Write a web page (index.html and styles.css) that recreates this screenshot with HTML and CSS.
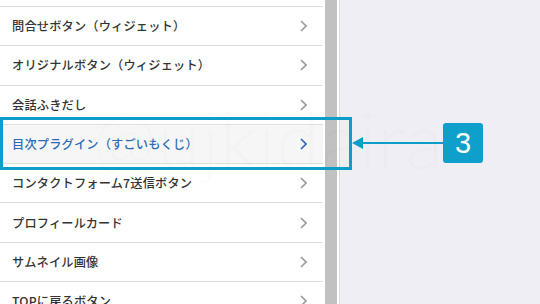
FILE: index.html
```html
<!DOCTYPE html>
<html lang="ja">
<head>
    <meta charset="UTF-8">
    <title>メニュー</title>
    <link rel="stylesheet" href="styles.css">
</head>
<body>
    <div class="page">
        <ul class="menu">
            <li class="menu-item"><span>問合せボタン（ウィジェット）</span><svg class="chev" viewBox="0 0 7 12"><polyline points="1,1 6,6 1,11"/></svg></li>
            <li class="menu-item"><span>オリジナルボタン（ウィジェット）</span><svg class="chev" viewBox="0 0 7 12"><polyline points="1,1 6,6 1,11"/></svg></li>
            <li class="menu-item"><span>会話ふきだし</span><svg class="chev" viewBox="0 0 7 12"><polyline points="1,1 6,6 1,11"/></svg></li>
            <li class="menu-item active"><span>目次プラグイン（すごいもくじ）</span><svg class="chev" viewBox="0 0 7 12"><polyline points="1,1 6,6 1,11"/></svg></li>
            <li class="menu-item"><span>コンタクトフォーム7送信ボタン</span><svg class="chev" viewBox="0 0 7 12"><polyline points="1,1 6,6 1,11"/></svg></li>
            <li class="menu-item"><span>プロフィールカード</span><svg class="chev" viewBox="0 0 7 12"><polyline points="1,1 6,6 1,11"/></svg></li>
            <li class="menu-item"><span>サムネイル画像</span><svg class="chev" viewBox="0 0 7 12"><polyline points="1,1 6,6 1,11"/></svg></li>
            <li class="menu-item"><span>TOPに戻るボタン</span><svg class="chev" viewBox="0 0 7 12"><polyline points="1,1 6,6 1,11"/></svg></li>
        </ul>
        <div class="scrollbar"></div>
        <div class="gutter"></div>
        <div class="main"></div>

        <!-- annotation overlay -->
        <div class="watermark">@ujkidaira</div>
        <div class="highlight"></div>
        <div class="arrow"><span class="arrow-head"></span><span class="arrow-line"></span></div>
        <div class="badge">3</div>
    </div>
</body>
</html>
```

FILE: styles.css
```css
* {
    margin: 0;
    padding: 0;
    box-sizing: border-box;
}

body {
    font-family: "Noto Sans CJK JP", "Noto Sans", sans-serif;
    background: #efeef4;
    width: 540px;
    height: 304px;
    overflow: hidden;
}

.page {
    position: relative;
    display: flex;
    height: 304px;
    overflow: hidden;
}

.menu {
    list-style: none;
    width: 325px;
    background: #ffffff;
    padding: 6px 2px 0 0;
}

.menu-item {
    display: flex;
    align-items: center;
    justify-content: space-between;
    height: 39.3px;
    padding: 0 16px 0 12px;
    border-top: 1px solid #dedede;
    font-size: 12.2px;
    font-weight: 500;
    letter-spacing: 0.2px;
    color: #333333;
}

.menu-item.active {
    background: #f6f6f6;
    color: #2a6cb5;
}

.chev {
    width: 7px;
    height: 12px;
    fill: none;
    stroke: #9a9a9a;
    stroke-width: 1.6;
}

.menu-item.active .chev {
    stroke: #2a6cb5;
}

.scrollbar {
    width: 12px;
    background: #c1c1c1;
}

.gutter {
    width: 3px;
    background: #ffffff;
    border-right: 1px solid #dadada;
}

.main {
    flex: 1;
}

.watermark {
    position: absolute;
    left: 92px;
    top: 100px;
    font-family: Lato, "Open Sans", sans-serif;
    font-weight: 300;
    font-size: 78px;
    line-height: 1;
    letter-spacing: 1px;
    color: rgba(0, 0, 0, 0.012);
    pointer-events: none;
}

.highlight {
    position: absolute;
    left: 0;
    top: 117px;
    width: 352px;
    height: 53px;
    border: 3px solid #0e9cc9;
}

.arrow {
    position: absolute;
    left: 352px;
    top: 137px;
    width: 92px;
    height: 12px;
    display: flex;
    align-items: center;
}

.arrow-head {
    width: 0;
    height: 0;
    border-top: 6px solid transparent;
    border-bottom: 6px solid transparent;
    border-right: 11px solid #0e9cc9;
}

.arrow-line {
    flex: 1;
    height: 2.5px;
    background: #0e9cc9;
}

.badge {
    position: absolute;
    left: 443px;
    top: 123px;
    width: 40px;
    height: 40px;
    border-radius: 3px;
    background: #0e9fcb;
    color: #ffffff;
    font-family: "Liberation Sans", Arial, sans-serif;
    font-size: 29px;
    line-height: 40px;
    text-align: center;
}
```
